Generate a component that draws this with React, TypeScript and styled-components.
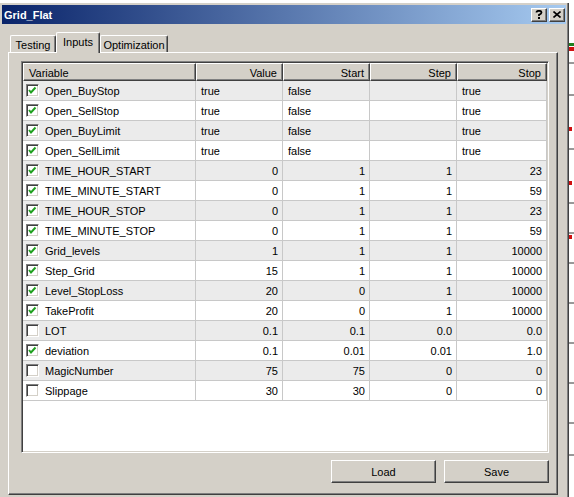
import React from 'react';
import styled, { createGlobalStyle } from 'styled-components';

const GlobalStyle = createGlobalStyle`
  html, body {
    margin: 0;
    padding: 0;
  }
  body {
    background: #ffffff;
    font-family: "Liberation Sans", Arial, sans-serif;
    font-size: 11px;
    color: #000000;
    overflow: hidden;
  }
`;

type Row = {
  name: string;
  checked: boolean;
  values: string[];
  bool?: boolean;
};

const rows: Row[] = [
  { name: 'Open_BuyStop', checked: true, values: ['true', 'false', '', 'true'], bool: true },
  { name: 'Open_SellStop', checked: true, values: ['true', 'false', '', 'true'], bool: true },
  { name: 'Open_BuyLimit', checked: true, values: ['true', 'false', '', 'true'], bool: true },
  { name: 'Open_SellLimit', checked: true, values: ['true', 'false', '', 'true'], bool: true },
  { name: 'TIME_HOUR_START', checked: true, values: ['0', '1', '1', '23'] },
  { name: 'TIME_MINUTE_START', checked: true, values: ['0', '1', '1', '59'] },
  { name: 'TIME_HOUR_STOP', checked: true, values: ['0', '1', '1', '23'] },
  { name: 'TIME_MINUTE_STOP', checked: true, values: ['0', '1', '1', '59'] },
  { name: 'Grid_levels', checked: true, values: ['1', '1', '1', '10000'] },
  { name: 'Step_Grid', checked: true, values: ['15', '1', '1', '10000'] },
  { name: 'Level_StopLoss', checked: true, values: ['20', '0', '1', '10000'] },
  { name: 'TakeProfit', checked: true, values: ['20', '0', '1', '10000'] },
  { name: 'LOT', checked: false, values: ['0.1', '0.1', '0.0', '0.0'] },
  { name: 'deviation', checked: true, values: ['0.1', '0.01', '0.01', '1.0'] },
  { name: 'MagicNumber', checked: false, values: ['75', '75', '0', '0'] },
  { name: 'Slippage', checked: false, values: ['30', '30', '0', '0'] },
];

const columns = '173px 87px 87px 87px 90px';

const Page = styled.div`
  width: 574px;
  height: 497px;
  display: flex;
  flex-direction: column;
  overflow: hidden;
`;

// the window behind the dialog peeks out above it
const TopStrip = styled.div`
  height: 3px;
  flex-shrink: 0;
  background: #ffffff;
  border-bottom: 0;
`;

const Main = styled.div`
  flex: 1;
  min-height: 0;
  display: flex;
  overflow: hidden;
`;

const Dialog = styled.div`
  width: 569px;
  flex-shrink: 0;
  box-sizing: border-box;
  background: #d4d0c8;
  padding: 2px 2px 0 2px;
  border-right: 1px solid #404040;
  box-shadow: inset -1px 0 #808080;
`;

const ChartStrip = styled.div`
  flex: 1;
  background: #ffffff;
`;

const TitleBar = styled.div`
  height: 19px;
  display: flex;
  align-items: center;
  padding: 0 1px 0 2px;
  background: linear-gradient(to right, #0a246a, #a6caf0);
  color: #ffffff;
  font-weight: bold;
  font-size: 11px;
`;

const Title = styled.div`
  flex: 1;
`;

const TitleButton = styled.div`
  width: 16px;
  height: 14px;
  box-sizing: border-box;
  margin-left: 2px;
  background: #d4d0c8;
  border: 1px solid;
  border-color: #ffffff #404040 #404040 #ffffff;
  box-shadow: inset -1px -1px #808080;
  display: flex;
  align-items: center;
  justify-content: center;
  color: #000;
`;

const TabRow = styled.div`
  display: flex;
  align-items: flex-end;
  height: 20px;
  margin: 8px 0 0 8px;
`;

const Tab = styled.div<{ $active?: boolean; $w: number }>`
  width: ${(p) => p.$w}px;
  height: ${(p) => (p.$active ? 21 : 17)}px;
  margin-bottom: ${(p) => (p.$active ? -1 : 0)}px;
  box-sizing: border-box;
  position: relative;
  z-index: ${(p) => (p.$active ? 1 : 0)};
  background: #d4d0c8;
  border-top: 1px solid #ffffff;
  border-left: 1px solid #ffffff;
  border-right: 1px solid #404040;
  box-shadow: inset -1px 0 #808080;
  border-radius: 2px 2px 0 0;
  display: flex;
  align-items: ${(p) => (p.$active ? 'flex-start' : 'center')};
  padding-top: ${(p) => (p.$active ? 3 : 1)}px;
  justify-content: center;
  font-size: 11px;
`;

const Panel = styled.div`
  margin-left: 6px;
  width: 550px;
  box-sizing: border-box;
  border-top: 1px solid #ffffff;
  border-left: 1px solid #ffffff;
  border-right: 1px solid #404040;
  border-bottom: 1px solid #404040;
  box-shadow: inset -1px -1px #808080;
  padding: 8px 7px 11px 12px;
`;

const List = styled.div`
  width: 528px;
  height: 392px;
  box-sizing: border-box;
  background: #ffffff;
  border: 1px solid;
  border-color: #808080 #ffffff #ffffff #808080;
  box-shadow: inset 1px 1px #404040, inset -1px -1px #d4d0c8;
  padding: 1px;
`;

const HeaderRow = styled.div`
  display: grid;
  grid-template-columns: ${columns};
`;

const HeaderCell = styled.div<{ $left?: boolean }>`
  height: 18px;
  box-sizing: border-box;
  background: #d4d0c8;
  border-top: 1px solid #ffffff;
  border-left: 1px solid #ffffff;
  border-right: 1px solid #404040;
  border-bottom: 1px solid #404040;
  box-shadow: inset -1px -1px #808080;
  padding: 1px 5px 0;
  display: flex;
  align-items: center;
  justify-content: ${(p) => (p.$left ? 'flex-start' : 'flex-end')};
`;

const DataRow = styled.div<{ $shade: boolean }>`
  display: grid;
  grid-template-columns: ${columns};
  background: ${(p) => (p.$shade ? '#ebebeb' : '#ffffff')};
`;

const Cell = styled.div<{ $left?: boolean }>`
  height: 20px;
  box-sizing: border-box;
  border-right: 1px solid #c8c8c8;
  border-bottom: 1px solid #c8c8c8;
  padding: 1px 4px 0 5px;
  display: flex;
  align-items: center;
  justify-content: ${(p) => (p.$left ? 'flex-start' : 'flex-end')};
  white-space: nowrap;
`;

const NameCell = styled(Cell)`
  padding-left: 3px;
  gap: 6px;
`;

const Check = styled.div`
  width: 13px;
  height: 13px;
  margin-top: -1px;
  box-sizing: border-box;
  background: #ffffff;
  border: 1px solid;
  border-color: #808080 #ffffff #ffffff #808080;
  box-shadow: inset 1px 1px #404040, inset -1px -1px #d4d0c8;
  display: flex;
  align-items: center;
  justify-content: center;
`;

const ButtonRow = styled.div`
  display: flex;
  justify-content: flex-end;
  gap: 8px;
  margin-top: 7px;
  padding-right: 1px;
`;

const Button = styled.div`
  width: 105px;
  height: 23px;
  box-sizing: border-box;
  background: #d4d0c8;
  border: 1px solid;
  border-color: #ffffff #404040 #404040 #ffffff;
  box-shadow: inset -1px -1px #808080;
  display: flex;
  align-items: center;
  justify-content: center;
  font-size: 11px;
`;

const CheckMark = () => (
  <svg width="9" height="9" viewBox="0 0 9 9">
    <polyline points="1,4 3,6.5 7.5,1.5" fill="none" stroke="#1fa01f" strokeWidth="2" />
  </svg>
);

const ChartMarks = () => (
  <svg width="5" height="494" viewBox="0 0 5 494">
    <rect x="0" y="40" width="5" height="3" fill="#208020" />
    <rect x="0" y="44" width="5" height="4" fill="#d01010" />
    <line x1="0" y1="60" x2="5" y2="60" stroke="#333" />
    <line x1="0" y1="92" x2="5" y2="92" stroke="#333" />
    <rect x="0" y="124" width="3" height="4" fill="#d01010" />
    <line x1="0" y1="146" x2="5" y2="146" stroke="#333" />
    <rect x="0" y="178" width="3" height="4" fill="#d01010" />
    <line x1="0" y1="200" x2="5" y2="200" stroke="#333" />
    <line x1="0" y1="230" x2="5" y2="230" stroke="#333" />
    <rect x="0" y="232" width="3" height="4" fill="#d01010" />
    <line x1="0" y1="260" x2="5" y2="260" stroke="#333" />
    <line x1="0" y1="300" x2="5" y2="300" stroke="#333" />
    <line x1="0" y1="340" x2="5" y2="340" stroke="#333" />
    <line x1="0" y1="380" x2="5" y2="380" stroke="#333" />
    <line x1="0" y1="420" x2="5" y2="420" stroke="#333" />
    <line x1="0" y1="452" x2="5" y2="452" stroke="#333" />
  </svg>
);

export default function App() {
  return (
    <>
      <GlobalStyle />
      <Page>
        <TopStrip />
        <Main>
          <Dialog>
            <TitleBar>
              <Title>Grid_Flat</Title>
              <TitleButton>
                <svg width="8" height="9" viewBox="0 0 8 9">
                  <path d="M1.5 2.5 Q1.5 0.8 4 0.8 Q6.5 0.8 6.5 2.6 Q6.5 3.8 4 4.8 L4 6" fill="none" stroke="#000" strokeWidth="1.8" />
                  <rect x="3" y="7" width="2" height="2" fill="#000" />
                </svg>
              </TitleButton>
              <TitleButton>
                <svg width="8" height="7" viewBox="0 0 8 7">
                  <path d="M0.5 0.5 L7.5 6.5 M7.5 0.5 L0.5 6.5" stroke="#000" strokeWidth="1.6" />
                </svg>
              </TitleButton>
            </TitleBar>
            <TabRow>
              <Tab $w={46}>Testing</Tab>
              <Tab $w={44} $active>
                Inputs
              </Tab>
              <Tab $w={68}>Optimization</Tab>
            </TabRow>
            <Panel>
              <List>
                <HeaderRow>
                  <HeaderCell $left>Variable</HeaderCell>
                  <HeaderCell>Value</HeaderCell>
                  <HeaderCell>Start</HeaderCell>
                  <HeaderCell>Step</HeaderCell>
                  <HeaderCell>Stop</HeaderCell>
                </HeaderRow>
                {rows.map((row, i) => (
                  <DataRow key={row.name} $shade={i % 2 === 0}>
                    <NameCell $left>
                      <Check>{row.checked && <CheckMark />}</Check>
                      {row.name}
                    </NameCell>
                    {row.values.map((v, j) => (
                      <Cell key={j} $left={row.bool}>
                        {v}
                      </Cell>
                    ))}
                  </DataRow>
                ))}
              </List>
              <ButtonRow>
                <Button>Load</Button>
                <Button>Save</Button>
              </ButtonRow>
            </Panel>
          </Dialog>
          <ChartStrip>
            <ChartMarks />
          </ChartStrip>
        </Main>
      </Page>
    </>
  );
}
